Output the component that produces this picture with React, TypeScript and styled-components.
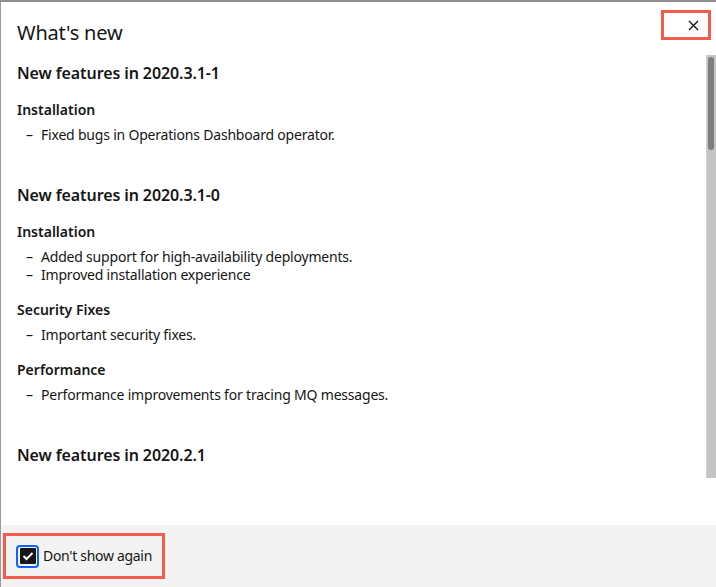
import React from "react";
import styled, { createGlobalStyle } from "styled-components";

const Global = createGlobalStyle`
  html, body { margin: 0; padding: 0; background: #ffffff; overflow: hidden; }
  * { box-sizing: border-box; }
  body { font-family: "Noto Sans", "Open Sans", sans-serif; color: #161616; }
`;

const Modal = styled.div`
  width: 716px;
  height: 587px;
  display: flex;
  flex-direction: column;
  background: #ffffff;
  border-top: 2px solid #8d8d8d;
  border-left: 1px solid #9a9a9a;
`;

const Header = styled.div`
  display: flex;
  justify-content: space-between;
  align-items: flex-start;
  padding: 8px 5px 0 16px;
  height: 53px;
  flex-shrink: 0;
`;

const Title = styled.h1`
  margin: 9px 0 0;
  font-size: 20px;
  line-height: 28px;
  font-weight: 400;
  letter-spacing: -0.2px;
`;

const Highlight = styled.div<{ $w: number; $h: number }>`
  width: ${(p) => p.$w}px;
  height: ${(p) => p.$h}px;
  border: 3px solid #f45b4b;
  display: flex;
  align-items: center;
`;

const CloseButton = styled.button`
  flex: 1;
  height: 100%;
  border: none;
  background: transparent;
  padding: 0 9px 0 0;
  display: flex;
  justify-content: flex-end;
  align-items: center;
  cursor: pointer;
`;

const Body = styled.div`
  height: 423px;
  flex-shrink: 0;
  display: flex;
  margin-bottom: 47px;
`;

const Content = styled.div`
  flex: 1;
  overflow: hidden;
  padding: 7px 16px 0 16px;
  display: flex;
  flex-direction: column;
`;

const Track = styled.div`
  width: 10px;
  background: #c4c4c4;
  border-left: 1px solid #d2d2d2;
  padding: 2px 2px 0 1px;
`;

const Thumb = styled.div<{ $h: number }>`
  height: ${(p) => p.$h}px;
  background: #7e7e7e;
  border-radius: 3px;
`;

const Section = styled.section`
  display: flex;
  flex-direction: column;
  margin-bottom: 23px;
  flex-shrink: 0;
`;

const Group = styled.div`
  display: flex;
  flex-direction: column;
`;

const Version = styled.h2`
  margin: 0 0 17px;
  font-size: 16px;
  line-height: 22px;
  font-weight: 600;
  letter-spacing: -0.1px;
`;

const Category = styled.h3`
  margin: 0 0 7px;
  font-size: 14px;
  line-height: 18px;
  font-weight: 600;
`;

const List = styled.ul`
  list-style: none;
  margin: 0 0 17px;
  padding: 0;
`;

const Item = styled.li`
  position: relative;
  font-size: 14px;
  line-height: 18px;
  padding-left: 24px;
  letter-spacing: -0.2px;
  white-space: nowrap;
  &::before {
    content: "–";
    position: absolute;
    left: 9px;
    top: 0;
  }
`;

const Footer = styled.div`
  flex: 1;
  background: #f3f3f3;
  padding: 8px 0 0 2px;
`;

const CheckLabel = styled.label`
  display: flex;
  align-items: center;
  gap: 4px;
  padding-left: 10px;
  font-size: 14px;
  line-height: 18px;
  letter-spacing: -0.3px;
  color: #161616;
`;

const BoxRing = styled.span`
  width: 23px;
  height: 23px;
  border: 2px solid #0f62fe;
  border-radius: 4px;
  display: flex;
  align-items: center;
  justify-content: center;
`;

const Box = styled.span`
  width: 16px;
  height: 16px;
  background: #161616;
  border-radius: 1px;
  display: flex;
  align-items: center;
  justify-content: center;
`;

const sections = [
  {
    version: "2020.3.1-1",
    groups: [
      { title: "Installation", items: ["Fixed bugs in Operations Dashboard operator."] },
    ],
  },
  {
    version: "2020.3.1-0",
    groups: [
      {
        title: "Installation",
        items: ["Added support for high-availability deployments.", "Improved installation experience"],
      },
      { title: "Security Fixes", items: ["Important security fixes."] },
      { title: "Performance", items: ["Performance improvements for tracing MQ messages."] },
    ],
  },
  {
    version: "2020.2.1",
    groups: [] as { title: string; items: string[] }[],
  },
];

export default function App() {
  return (
    <>
      <Global />
      <Modal>
        <Header>
          <Title>What's new</Title>
          <Highlight $w={50} $h={30}>
            <CloseButton aria-label="Close">
              <svg width="11" height="11" viewBox="0 0 11 11">
                <path d="M1 1 L10 10 M10 1 L1 10" stroke="#161616" strokeWidth="1.4" fill="none" />
              </svg>
            </CloseButton>
          </Highlight>
        </Header>
        <Body>
          <Content>
            {sections.map((s) => (
              <Section key={s.version}>
                <Version>New features in {s.version}</Version>
                {s.groups.map((g) => (
                  <Group key={g.title}>
                    <Category>{g.title}</Category>
                    <List>
                      {g.items.map((it) => (
                        <Item key={it}>{it}</Item>
                      ))}
                    </List>
                  </Group>
                ))}
              </Section>
            ))}
          </Content>
          <Track>
            <Thumb $h={93} />
          </Track>
        </Body>
        <Footer>
          <Highlight $w={162} $h={46}>
            <CheckLabel>
              <BoxRing>
                <Box>
                  <svg width="12" height="10" viewBox="0 0 12 10">
                    <path d="M1.5 5 L4.5 8 L10.5 2" stroke="#ffffff" strokeWidth="2" fill="none" />
                  </svg>
                </Box>
              </BoxRing>
              Don't show again
            </CheckLabel>
          </Highlight>
        </Footer>
      </Modal>
    </>
  );
}
